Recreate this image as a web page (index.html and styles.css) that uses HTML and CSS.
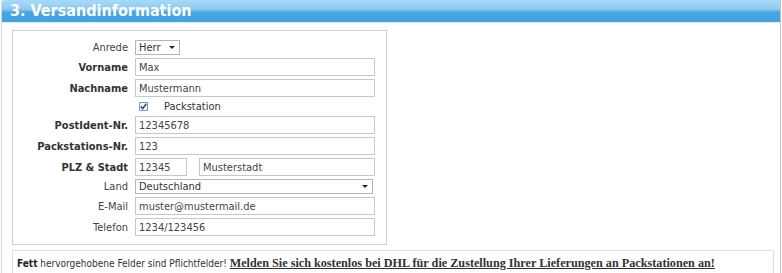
FILE: index.html
```html
<!DOCTYPE html>
<html lang="de">
<head>
<meta charset="utf-8">
<title>Versandinformation</title>
<link rel="stylesheet" href="styles.css">
</head>
<body>
<div class="panel">
  <h2 class="panel-title">3. Versandinformation</h2>
  <div class="panel-body">
    <div class="form-box">
      <label class="lbl">Anrede</label>
      <div class="ctl"><div class="fselect small"><span>Herr</span><i class="caret"></i></div></div>

      <label class="lbl req">Vorname</label>
      <div class="ctl"><input class="inp" type="text" value="Max"></div>

      <label class="lbl req">Nachname</label>
      <div class="ctl"><input class="inp" type="text" value="Mustermann"></div>

      <span class="lbl"></span>
      <div class="ctl check-row">
        <span class="cbox"><svg width="7" height="7" viewBox="0 0 7 7"><path d="M0.8 3.6 L2.7 5.6 L6.2 0.9" fill="none" stroke="#1d3b8a" stroke-width="1.5"/></svg></span>
        <span class="check-label">Packstation</span>
      </div>

      <label class="lbl req">PostIdent-Nr.</label>
      <div class="ctl"><input class="inp" type="text" value="12345678"></div>

      <label class="lbl req">Packstations-Nr.</label>
      <div class="ctl"><input class="inp" type="text" value="123"></div>

      <label class="lbl req">PLZ &amp; Stadt</label>
      <div class="ctl split"><input class="inp plz" type="text" value="12345"><input class="inp city" type="text" value="Musterstadt"></div>

      <label class="lbl">Land</label>
      <div class="ctl"><div class="fselect wide"><span>Deutschland</span><i class="caret"></i></div></div>

      <label class="lbl">E-Mail</label>
      <div class="ctl"><input class="inp" type="text" value="muster@mustermail.de"></div>

      <label class="lbl">Telefon</label>
      <div class="ctl"><input class="inp" type="text" value="1234/123456"></div>
    </div>
    <div class="note"><b>Fett</b> hervorgehobene Felder sind Pflichtfelder! <a href="#" class="note-link">Melden Sie sich kostenlos bei DHL für die Zustellung Ihrer Lieferungen an Packstationen an!</a></div>
  </div>
</div>
</body>
</html>
```
FILE: styles.css
```css
* { box-sizing: border-box; }
html, body { margin: 0; padding: 0; background: #fff; }
body {
  font-family: "DejaVu Sans Condensed", "DejaVu Sans", Verdana, sans-serif;
  font-size: 11px;
  color: #333;
}
.panel {
  height: 273px;
  border-left: 1px solid #c9dbe8;
  border-right: 1px solid #b9c3cb;
  margin-left: 1px;
  width: 780px;
}
.panel-title {
  margin: 0;
  height: 23px;
  padding: 1px 0 0 8px;
  font-family: "DejaVu Sans Condensed", "DejaVu Sans", Verdana, sans-serif;
  font-size: 16px;
  font-weight: bold;
  color: #fff;
  line-height: 19px;
  background: linear-gradient(#a8daf7 0, #8fcaf0 9px, #6fb6e4 11px, #46a6e2 12px, #43a3e1 22px, #dff0fb 22px);
  border-top-left-radius: 3px;
}
.panel-body {
  padding: 7px 8px 0 10px;
}
.form-box {
  width: 375px;
  border: 1px solid #cfcfcf;
  display: grid;
  grid-template-columns: 115px 240px;
  column-gap: 7px;
  row-gap: 3px;
  padding: 9px 0 8px 0;
  align-items: center;
}
.lbl {
  text-align: right;
  color: #444;
  white-space: nowrap;
}
.lbl.req { font-weight: bold; color: #333; }
.ctl { display: flex; align-items: center; }
.inp {
  width: 240px;
  height: 18px;
  border: 1px solid #c8c8c8;
  padding: 0 3px;
  font: inherit;
  color: #444;
  background: #fff;
  outline: none;
}
.split { gap: 12px; }
.inp.plz { width: 52px; }
.inp.city { width: 176px; }
.fselect {
  position: relative;
  height: 15px;
  border: 1px solid #b5b5b5;
  padding: 0 0 0 3px;
  line-height: 13px;
  color: #333;
  background: #fff;
}
.fselect.small { width: 45px; }
.fselect.wide { width: 238px; }
.caret {
  position: absolute;
  right: 4px;
  top: 5px;
  width: 0;
  height: 0;
  border-left: 3px solid transparent;
  border-right: 3px solid transparent;
  border-top: 3px solid #222;
}
.check-row { height: 13px; padding-left: 4px; }
.cbox {
  width: 9px;
  height: 9px;
  border: 1px solid #7f9db9;
  background: #f4f4f4;
  display: flex;
  align-items: center;
  justify-content: center;
}
.check-label { margin-left: 16px; }
.note {
  margin-top: 5px;
  width: 762px;
  height: 26px;
  border: 1px solid #dedede;
  border-bottom: none;
  padding: 5px 0 0 4px;
  font-size: 10px;
  color: #333;
  white-space: nowrap;
}
.note b { color: #222; }
.note-link {
  font-family: "Liberation Serif", "Times New Roman", serif;
  font-weight: bold;
  color: #333;
  text-decoration: underline;
  font-size: 12.2px;
}
```
